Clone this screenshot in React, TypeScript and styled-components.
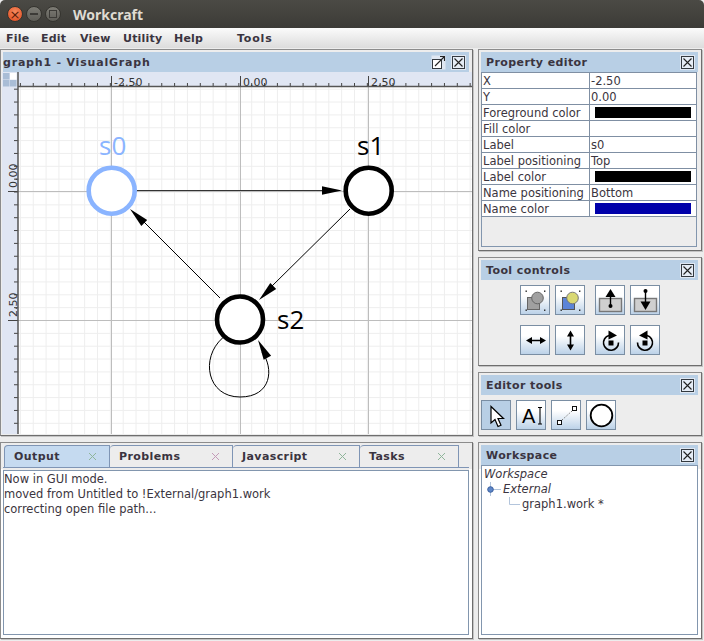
import React from "react";
import styled, { createGlobalStyle } from "styled-components";

const GlobalStyle = createGlobalStyle`
  html, body {
    margin: 0;
    padding: 0;
    background: #ededed;
  }
  * {
    box-sizing: border-box;
  }
`;

const FONT = `"DejaVu Sans", sans-serif`;

const MINOR = 12.85;
const MAJOR_X = [111, 240, 368];
const MAJOR_Y = [191, 320];
const X_LINES = Array.from({ length: 36 }, (_, i) => 20.4 + i * MINOR);
const Y_LINES = Array.from({ length: 28 }, (_, i) => 89.2 + i * MINOR);

const properties = [
  { name: "X", value: "-2.50" },
  { name: "Y", value: "0.00" },
  { name: "Foreground color", color: "#000000" },
  { name: "Fill color", value: "" },
  { name: "Label", value: "s0" },
  { name: "Label positioning", value: "Top" },
  { name: "Label color", color: "#000000" },
  { name: "Name positioning", value: "Bottom" },
  { name: "Name color", color: "#0000aa" },
];

const tabs = [
  { label: "Output", width: 106, active: true, x: "#8fb59a" },
  { label: "Problems", width: 123, x: "#c49ab8" },
  { label: "Javascript", width: 127, x: "#8fb59a" },
  { label: "Tasks", width: 99, x: "#8fb59a" },
];

const CloseIcon = () => (
  <svg width="15" height="15" viewBox="0 0 15 15">
    <rect x="0.5" y="0.5" width="14" height="14" fill="#fff" stroke="#dfe7f2" />
    <rect x="1.5" y="1.5" width="12" height="12" fill="#e6edf6" stroke="#33393f" />
    <path d="M3.5 3.5 L11.5 11.5 M11.5 3.5 L3.5 11.5" stroke="#222" strokeWidth="1.1" />
  </svg>
);

const FloatIcon = () => (
  <svg width="15" height="15" viewBox="0 0 15 15">
    <rect x="0.5" y="0.5" width="14" height="14" fill="#dfe7f2" stroke="none" />
    <rect x="1.5" y="4.5" width="9" height="9" fill="#fff" stroke="#33393f" />
    <path d="M4 11 L13 2 M9 1.5 H13.5 V6" fill="none" stroke="#222" strokeWidth="1.1" />
  </svg>
);

const TabX = ({ color }: { color: string }) => (
  <svg width="9" height="9" viewBox="0 0 9 9">
    <path d="M1 1 L8 8 M8 1 L1 8" stroke={color} strokeWidth="1" />
  </svg>
);

const Dots = () => (
  <g fill="#222">
    <rect x="4.5" y="4.5" width="1.4" height="1.4" />
    <rect x="23" y="4.5" width="1.4" height="1.4" />
    <rect x="4.5" y="23.5" width="1.4" height="1.4" />
    <rect x="23" y="23.5" width="1.4" height="1.4" />
  </g>
);

const RotateArrow = () => (
  <g>
    <path d="M13 9.5 A7.5 7.5 0 1 0 22.5 16.5" fill="none" stroke="#000" strokeWidth="1.6" />
    <path d="M12.5 4.5 L21 9.5 L12.5 13.5 Z" fill="#000" />
    <rect x="12.5" y="14.5" width="5" height="5" fill="#000" />
  </g>
);

const toolIcons: React.ReactNode[][] = [
  [
    <>
      <rect x="6.5" y="11.5" width="12" height="12" fill="#a0a0a0" stroke="#666" />
      <circle cx="16.5" cy="12" r="5.8" fill="#a0a0a0" stroke="#666" />
      <Dots />
    </>,
    <>
      <rect x="6.5" y="11.5" width="12" height="12" fill="#5b84d8" stroke="#555" />
      <circle cx="16.5" cy="12" r="5.8" fill="#d9d873" stroke="#777" />
      <Dots />
    </>,
    <>
      <rect x="3.5" y="12.5" width="22" height="13" fill="#cfcfcf" stroke="#777" strokeWidth="1.4" />
      <path d="M14.5 11 V20" stroke="#000" strokeWidth="1.4" />
      <path d="M14.5 3 L19.5 11 H9.5 Z" fill="#000" />
      <circle cx="14.5" cy="20" r="2" fill="#000" />
    </>,
    <>
      <rect x="3.5" y="12.5" width="22" height="13" fill="#cfcfcf" stroke="#777" strokeWidth="1.4" />
      <path d="M14.5 5 V16" stroke="#000" strokeWidth="1.4" />
      <circle cx="14.5" cy="5" r="2" fill="#000" />
      <path d="M14.5 24 L19.5 15.5 H9.5 Z" fill="#000" />
    </>,
  ],
  [
    <path d="M5 14.5 L11 11 V13.7 H19 V11 L25 14.5 L19 18 V15.3 H11 V18 Z" fill="#000" />,
    <path d="M14.5 4.5 L18 10.5 H15.3 V18.5 H18 L14.5 24.5 L11 18.5 H13.7 V10.5 H11 Z" fill="#000" />,
    <RotateArrow />,
    <g transform="translate(29 0) scale(-1 1)">
      <RotateArrow />
    </g>,
  ],
];

const App = () => {
  return (
    <Root>
      <GlobalStyle />
      <TitleBar>
        <WindowButton $kind="close">×</WindowButton>
        <WindowButton $kind="min">
          <MinBar />
        </WindowButton>
        <WindowButton $kind="max">
          <MaxBox />
        </WindowButton>
        <WindowTitle>Workcraft</WindowTitle>
      </TitleBar>
      <MenuBar>
        <MenuItem $width={35}>File</MenuItem>
        <MenuItem $width={39}>Edit</MenuItem>
        <MenuItem $width={43}>View</MenuItem>
        <MenuItem $width={51}>Utility</MenuItem>
        <MenuItem $width={63}>Help</MenuItem>
        <MenuItem $wide>Tools</MenuItem>
      </MenuBar>
      <Body>
        <Column>
          <Panel $height={387}>
            <PanelHeader $wide>
              <span>graph1 - VisualGraph</span>
              <HeaderIcons>
                <FloatIcon />
                <CloseIcon />
              </HeaderIcons>
            </PanelHeader>
            <GraphView />
          </Panel>
          <Panel $height={197} $light>
            <TabRow>
              {tabs.map((tab) => (
                <Tab key={tab.label} $width={tab.width} $active={tab.active}>
                  {tab.label}
                  <TabX color={tab.x} />
                </Tab>
              ))}
            </TabRow>
            <OutputPane>
              <OutputText>
                <div>Now in GUI mode.</div>
                <div>moved from Untitled to !External/graph1.work</div>
                <div>correcting open file path...</div>
              </OutputText>
            </OutputPane>
          </Panel>
        </Column>
        <Column>
          <Panel $height={202}>
            <PanelHeader>
              <HeaderPad>Property editor</HeaderPad>
              <CloseIcon />
            </PanelHeader>
            <PropertyBox>
              <PropertyTable>
                <tbody>
                  {properties.map((p) => (
                    <tr key={p.name}>
                      <NameCell>{p.name}</NameCell>
                      <ValueCell>
                        {p.color ? <Swatch style={{ background: p.color }} /> : p.value}
                      </ValueCell>
                    </tr>
                  ))}
                </tbody>
              </PropertyTable>
            </PropertyBox>
          </Panel>
          <Panel $height={109}>
            <PanelHeader>
              <HeaderPad>Tool controls</HeaderPad>
              <CloseIcon />
            </PanelHeader>
            <ToolGrid>
              {toolIcons.map((row, r) => (
                <ToolRow key={r}>
                  {row.map((icon, i) => (
                    <React.Fragment key={i}>
                      <ToolButton>
                        <svg width="29" height="29" viewBox="0 0 29 29">
                          {icon}
                        </svg>
                      </ToolButton>
                      {i === 1 && <ToolGap />}
                    </React.Fragment>
                  ))}
                </ToolRow>
              ))}
            </ToolGrid>
          </Panel>
          <Panel $height={64}>
            <PanelHeader>
              <HeaderPad>Editor tools</HeaderPad>
              <CloseIcon />
            </PanelHeader>
            <EditorRow>
              <ToolButton $selected>
                <svg width="29" height="29" viewBox="0 0 29 29">
                  <path
                    d="M9 5.5 V22 L13 18.5 L16 25.5 L19 24.2 L16 17.5 L21.5 17.5 Z"
                    fill="#fff"
                    stroke="#000"
                    strokeWidth="1.2"
                  />
                </svg>
              </ToolButton>
              <ToolButton>
                <svg width="29" height="29" viewBox="0 0 29 29">
                  <text x="5" y="22" fontFamily="Liberation Sans" fontSize="20" fill="#000">
                    A
                  </text>
                  <path d="M21 6.5 H25 M23 6.5 V23 M21 23 H25" stroke="#000" strokeWidth="1.1" fill="none" />
                </svg>
              </ToolButton>
              <ToolButton>
                <svg width="29" height="29" viewBox="0 0 29 29">
                  <rect x="5.5" y="19.5" width="4" height="4" fill="#fff" stroke="#111" />
                  <rect x="20.5" y="5.5" width="4" height="4" fill="#fff" stroke="#111" />
                  <path d="M10 19 L20 10" stroke="#777" strokeDasharray="1.5 1.5" />
                </svg>
              </ToolButton>
              <ToolButton>
                <svg width="29" height="29" viewBox="0 0 29 29">
                  <circle cx="14.5" cy="14.5" r="10.8" fill="#fff" stroke="#000" strokeWidth="1.8" />
                </svg>
              </ToolButton>
            </EditorRow>
          </Panel>
          <Panel $height={197} $light>
            <PanelHeader>
              <HeaderPad>Workspace</HeaderPad>
              <CloseIcon />
            </PanelHeader>
            <TreeBox>
              <TreeRow $italic>Workspace</TreeRow>
              <TreeRow $italic $indent={1}>
                <svg width="19" height="15" viewBox="0 0 19 15">
                  <path d="M6.5 0 V14 M6.5 7.5 H17" stroke="#b3c5dc" />
                  <circle cx="6.5" cy="7.5" r="2.8" fill="#5d86c8" stroke="#3a5f9e" />
                </svg>
                External
              </TreeRow>
              <TreeRow $indent={2}>
                <svg width="14" height="15" viewBox="0 0 14 15">
                  <path d="M1.5 0 V7.5 H12" stroke="#b3c5dc" fill="none" />
                </svg>
                graph1.work *
              </TreeRow>
            </TreeBox>
          </Panel>
        </Column>
      </Body>
    </Root>
  );
};

const Arrow = ({ tipX, tipY, angle }: { tipX: number; tipY: number; angle: number }) => (
  <path
    d="M0 0 L-20 -4.2 L-20 4.2 Z"
    fill="#000"
    transform={`translate(${tipX} ${tipY}) rotate(${angle})`}
  />
);

const GraphView = () => (
  <GraphSvg width="470" height="362" viewBox="2 72 470 362">
    <rect x="2" y="72" width="470" height="362" fill="#e0e6f3" />
    <rect x="18" y="87" width="454" height="347" fill="#fff" />
    {X_LINES.filter((x) => x > 18).map((x) => (
      <line key={x} x1={x} x2={x} y1="87" y2="434" stroke="#eeeeee" />
    ))}
    {Y_LINES.map((y) => (
      <line key={y} x1="18" x2="472" y1={y} y2={y} stroke="#eeeeee" />
    ))}
    {MAJOR_X.map((x) => (
      <line key={x} x1={x + 0.5} x2={x + 0.5} y1="87" y2="434" stroke="#bdbdbd" />
    ))}
    {MAJOR_Y.map((y) => (
      <line key={y} x1="18" x2="472" y1={y + 0.5} y2={y + 0.5} stroke="#bdbdbd" />
    ))}

    {X_LINES.filter((x) => x > 18).map((x) => (
      <line key={x} x1={x} x2={x} y1="83" y2="87" stroke="#444" />
    ))}
    {Y_LINES.map((y) => (
      <line key={y} x1="14" x2="18" y1={y} y2={y} stroke="#444" />
    ))}
    {MAJOR_X.map((x) => (
      <line key={x} x1={x + 0.5} x2={x + 0.5} y1="76" y2="87" stroke="#444" />
    ))}
    {MAJOR_Y.map((y) => (
      <line key={y} x1="8" x2="18" y1={y + 0.5} y2={y + 0.5} stroke="#444" />
    ))}
    <line x1="18" x2="472" y1="86.5" y2="86.5" stroke="#555" strokeWidth="1.5" />
    <line x1="18" x2="18" y1="72" y2="434" stroke="#555" strokeWidth="1.5" />

    <RulerText x="114" y="86">-2.50</RulerText>
    <RulerText x="243" y="86">0.00</RulerText>
    <RulerText x="371" y="86">2.50</RulerText>
    <RulerText transform="translate(17 188) rotate(-90)">0.00</RulerText>
    <RulerText transform="translate(17 317) rotate(-90)">2.50</RulerText>

    <g fill="#a9bdd6">
      <rect x="3" y="73" width="6.5" height="6.5" />
      <rect x="10" y="73" width="6.5" height="6.5" fill="#fff" />
      <rect x="3" y="80" width="6.5" height="6.5" />
      <rect x="10" y="80" width="6.5" height="6.5" />
    </g>

    <g fill="none" stroke="#000">
      <line x1="137" y1="190.5" x2="325" y2="190.5" stroke="#333" strokeWidth="1.2" />
      <line x1="350" y1="209" x2="270" y2="288" />
      <line x1="220" y1="298" x2="142" y2="220" />
      <path d="M222.5 338 C 200 358, 207 397, 240 397 C 272 397, 274 368, 262 352" />
    </g>
    <Arrow tipX={342} tipY={190.5} angle={0} />
    <Arrow tipX={259} tipY={300} angle={135.5} />
    <Arrow tipX={130} tipY={209} angle={-135.5} />
    <Arrow tipX={258} tipY={340} angle={-118} />

    <circle cx="111.7" cy="190.7" r="23" fill="#fff" stroke="#8ab4ff" strokeWidth="4.6" />
    <circle cx="368.7" cy="190.7" r="23" fill="#fff" stroke="#000" strokeWidth="4.6" />
    <circle cx="240" cy="319.5" r="23" fill="#fff" stroke="#000" strokeWidth="4.6" />

    <NodeLabel x="99" y="155" fill="#8ab4ff">s0</NodeLabel>
    <NodeLabel x="357" y="155" fill="#000">s1</NodeLabel>
    <NodeLabel x="277" y="329" fill="#000">s2</NodeLabel>
  </GraphSvg>
);

export default App;

const Root = styled.div`
  width: 704px;
  height: 641px;
  display: flex;
  flex-direction: column;
  overflow: hidden;
  background: #ededed;
  font-family: ${FONT};
  color: #333;
`;

const TitleBar = styled.div`
  height: 28px;
  flex: none;
  display: flex;
  align-items: center;
  padding-left: 7px;
  gap: 3px;
  background: linear-gradient(#4b4a45, #3c3b37);
  border-radius: 5px 5px 0 0;
`;

const WindowButton = styled.div<{ $kind: "close" | "min" | "max" }>`
  width: 16px;
  height: 16px;
  border-radius: 50%;
  display: flex;
  align-items: center;
  justify-content: center;
  font-size: 13px;
  line-height: 1;
  color: #5a1c08;
  border: 1px solid #35342f;
  background: ${(p) =>
    p.$kind === "close"
      ? "radial-gradient(circle at 50% 35%, #f58a5e, #e0491d)"
      : "linear-gradient(#7d7c75, #5e5d57)"};
`;

const MinBar = styled.div`
  width: 8px;
  height: 2px;
  background: #3c3b37;
`;

const MaxBox = styled.div`
  width: 8px;
  height: 8px;
  border: 1px solid #3c3b37;
`;

const WindowTitle = styled.div`
  margin-left: 9px;
  font-family: "Noto Sans", sans-serif;
  font-weight: 700;
  font-size: 14px;
  color: #dfdbd2;
`;

const MenuBar = styled.div`
  height: 20px;
  flex: none;
  display: flex;
  align-items: center;
  padding-left: 6px;
  background: linear-gradient(#fbfbfb, #dcdcdc);
`;

const MenuItem = styled.div<{ $width?: number; $wide?: boolean }>`
  width: ${(p) => (p.$width ? `${p.$width}px` : "auto")};
  font-weight: 700;
  font-size: 11px;
  color: #3a3440;
  letter-spacing: ${(p) => (p.$wide ? "0.8px" : "0.2px")};
`;

const Body = styled.div`
  flex: 1;
  display: grid;
  grid-template-columns: 473px 224px;
  column-gap: 5px;
  padding-top: 1px;
`;

const Column = styled.div`
  display: flex;
  flex-direction: column;
  gap: 6px;
`;

const Panel = styled.div<{ $height: number; $light?: boolean }>`
  height: ${(p) => p.$height}px;
  flex: none;
  display: flex;
  flex-direction: column;
  padding: 2px 3px 3px 2px;
  background: ${(p) => (p.$light ? "linear-gradient(#ededed 26px, #fff 26px)" : "#ededed")};
  border: 1px solid #8c8c8c;
  border-bottom-color: #6e6e6e;
  border-right-color: #6e6e6e;
  box-shadow: 1px 1px 0 #c4c4c4;
`;

const PanelHeader = styled.div<{ $wide?: boolean }>`
  height: 20px;
  flex: none;
  display: flex;
  align-items: center;
  justify-content: space-between;
  padding-right: 3px;
  background: #b8cfe5;
  font-weight: 700;
  font-size: 11px;
  letter-spacing: ${(p) => (p.$wide ? "0.8px" : "0.4px")};
  color: #3a3440;
  white-space: nowrap;
`;

const HeaderPad = styled.span`
  padding-left: 5px;
`;

const HeaderIcons = styled.div`
  display: flex;
  gap: 5px;
  align-items: center;
`;

const GraphSvg = styled.svg`
  display: block;
  flex: none;
  margin-left: -1px;
`;

const RulerText = styled.text`
  font-family: ${FONT};
  font-size: 11px;
  fill: #333;
`;

const NodeLabel = styled.text`
  font-family: "Open Sans", sans-serif;
  font-size: 26px;
`;

const TabRow = styled.div`
  display: flex;
  height: 22px;
  flex: none;
  padding-left: 1px;
`;

const Tab = styled.div<{ $width: number; $active?: boolean }>`
  width: ${(p) => p.$width}px;
  display: flex;
  align-items: center;
  justify-content: space-between;
  padding: 0 12px 0 9px;
  font-weight: 700;
  font-size: 11px;
  letter-spacing: 0.4px;
  color: #3a3440;
  border: 1px solid #7f95b5;
  border-left-width: ${(p) => (p.$active ? "1px" : "0")};
  border-bottom: 0;
  border-top-left-radius: 4px;
  background: ${(p) => (p.$active ? "#c5daf0" : "#ededed")};
`;

const OutputPane = styled.div`
  flex: 1;
  border-top: 1px solid #7f95b5;
  padding-top: 2px;
  background: linear-gradient(#ededed 2px, #fff 2px);
  display: flex;
`;

const OutputText = styled.div`
  flex: 1;
  background: #fff;
  border: 1px solid #8296ae;
  padding: 1px 0;
  font-size: 11.5px;
  line-height: 15px;
  color: #3b3540;
`;

const PropertyBox = styled.div`
  flex: 1;
  border: 1px solid #8296ae;
  border-top: 0;
  margin-right: 1px;
  background: #ededed;
`;

const PropertyTable = styled.table`
  width: calc(100% + 2px);
  margin: 0 -1px;
  border-collapse: collapse;
  table-layout: fixed;
  background: #fff;
  font-size: 11.5px;
  color: #3b3540;
  td {
    height: 16px;
    padding: 0 0 0 1px;
    border: 1px solid #7f8fa3;
    white-space: nowrap;
    overflow: hidden;
    line-height: 14px;
  }
`;

const NameCell = styled.td`
  width: 108px;
`;

const ValueCell = styled.td``;

const Swatch = styled.div`
  width: 96px;
  height: 11px;
  margin-left: 4px;
`;

const ToolGrid = styled.div`
  display: flex;
  flex-direction: column;
  align-items: flex-start;
  gap: 10px;
  padding: 5px 0 0 39px;
`;

const ToolRow = styled.div`
  display: flex;
  gap: 5px;
`;

const ToolGap = styled.div`
  width: 0;
`;

const ToolButton = styled.div<{ $selected?: boolean }>`
  width: 30px;
  height: 30px;
  flex: none;
  border: 1px solid #7a8ea3;
  background: ${(p) => (p.$selected ? "#b8cfe5" : "linear-gradient(#ffffff 35%, #bcd2e8)")};
  svg {
    display: block;
  }
`;

const EditorRow = styled.div`
  display: flex;
  gap: 5px;
  padding-top: 5px;
`;

const TreeBox = styled.div`
  flex: 1;
  background: #fff;
  border: 1px solid #8296ae;
  padding: 1px 0 0 2px;
  font-size: 11.5px;
  line-height: 15px;
  color: #3b3540;
`;

const TreeRow = styled.div<{ $italic?: boolean; $indent?: number }>`
  display: flex;
  height: 15px;
  align-items: center;
  font-style: ${(p) => (p.$italic ? "italic" : "normal")};
  padding-left: ${(p) => (p.$indent === 2 ? 24 : 0)}px;
`;
